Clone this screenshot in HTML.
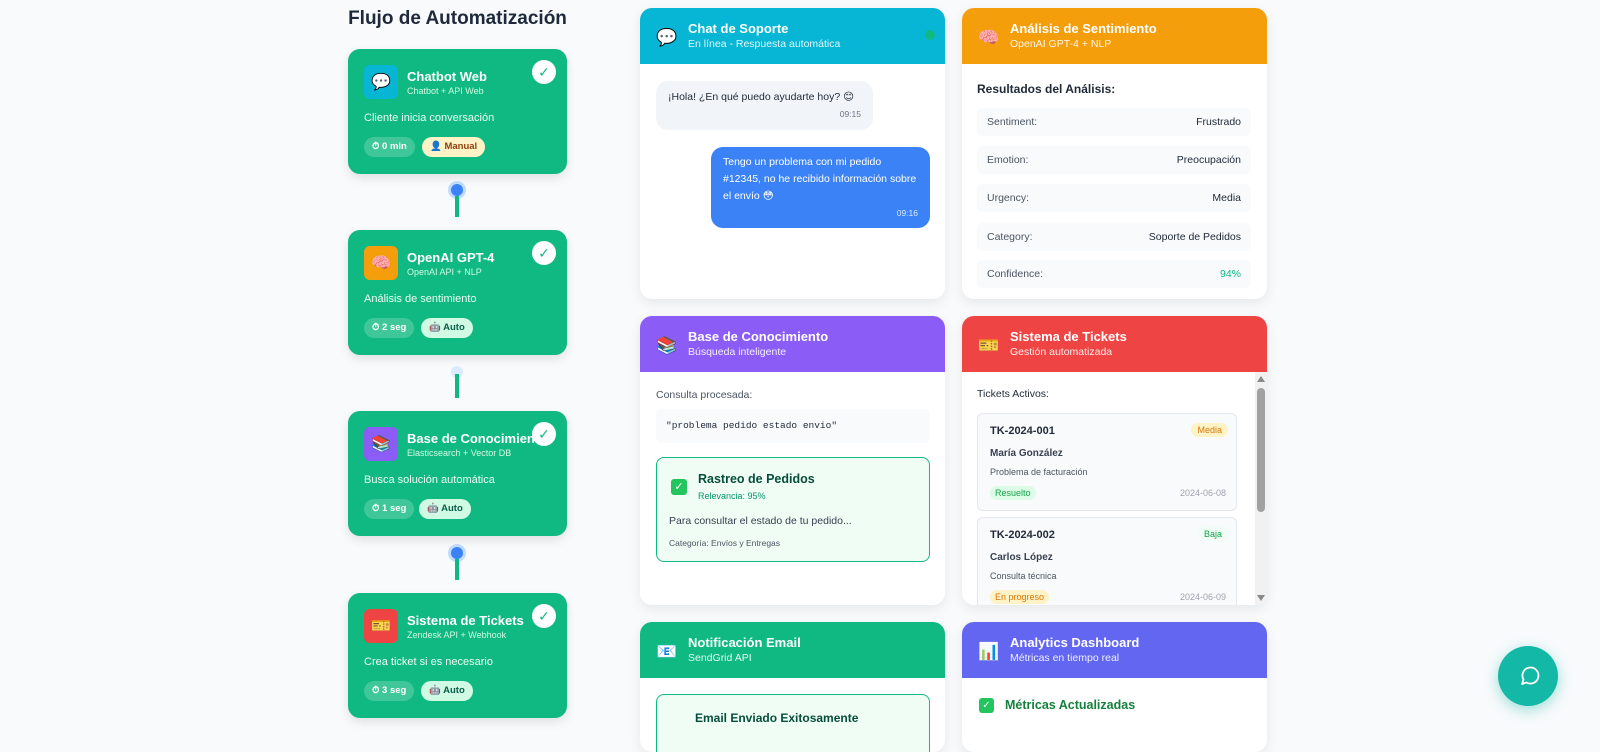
<!DOCTYPE html>
<html><head><meta charset="utf-8"><style>
*{box-sizing:border-box;margin:0;padding:0}
body{width:1600px;height:731px;overflow:hidden;background:#f8fafc;font-family:"Liberation Sans","DejaVu Sans",sans-serif;color:#1f2937;position:relative}
.abs{position:absolute}
h1{position:absolute;left:348px;width:219px;top:8px;text-align:center;font-size:19px;font-weight:bold;color:#1e293b;white-space:nowrap}
.step{position:absolute;left:348px;width:219px;height:125px;background:#10b981;border-radius:12px;color:#fff;box-shadow:0 4px 10px rgba(0,0,0,.1)}
.step .ic{position:absolute;left:16px;top:16px;width:34px;height:34px;border-radius:6px;display:flex;align-items:center;justify-content:center;font-size:16px}
.step .t{position:absolute;left:59px;top:20px;font-size:13px;font-weight:bold;white-space:nowrap}
.step .s{position:absolute;left:59px;top:37px;font-size:9px;color:#d1fae5}
.step .ck{position:absolute;right:11px;top:11px;width:24px;height:24px;border-radius:50%;background:#fff;color:#10b981;font-size:14px;text-align:center;line-height:24px}
.step .d{position:absolute;left:16px;top:63px;font-size:11px;color:#ecfdf5}
.step .b{position:absolute;top:88px;height:20px;border-radius:10px;font-size:9.5px;font-weight:bold;line-height:20px;padding:0 8px;white-space:nowrap}
.b1{left:16px;background:rgba(255,255,255,.2);color:#fff}
.b2{left:74px;background:#fef3c7;color:#92400e}
.b3{left:73px;background:#d1fae5;color:#065f46}
.dot{position:absolute;left:451px;width:12px;height:12px;border-radius:50%;background:#3b82f6;box-shadow:0 0 0 3px #bfdbfe}
.line{position:absolute;left:455px;width:4px;background:#10b981}
.card{position:absolute;width:305px;background:#fff;border-radius:12px;overflow:hidden;box-shadow:0 4px 12px rgba(0,0,0,.08)}
.hd{height:56px;position:relative;color:#fff}
.hd .ic{position:absolute;left:16px;top:20px;font-size:17px}
.hd .t{position:absolute;left:48px;top:13px;font-size:13px;font-weight:bold}
.hd .s{position:absolute;left:48px;top:30px;font-size:10.5px;opacity:.9}
.row{position:absolute;left:15px;width:274px;height:28px;background:#f8fafc;border-radius:6px;font-size:10.5px;line-height:28px;padding:0 10px;color:#4b5563}
.row b{float:right;font-weight:normal;color:#1f2937}
.tk{position:absolute;left:15px;width:260px;height:98px;background:#f9fafb;border:1px solid #e5e7eb;border-radius:6px}
.tk .id{position:absolute;left:12px;top:11px;font-size:11px;font-weight:bold}
.tk .pr{position:absolute;right:8px;top:9px;font-size:9px;padding:2px 6px;border-radius:8px}
.tk .n{position:absolute;left:12px;top:34px;font-size:10px;font-weight:bold;color:#374151}
.tk .ds{position:absolute;left:12px;top:53px;font-size:9px;color:#4b5563}
.tk .st{position:absolute;left:12px;top:72px;font-size:9px;padding:2px 5px;border-radius:8px}
.tk .dt{position:absolute;right:10px;top:74px;font-size:9px;color:#9ca3af}
</style></head><body>
<h1>Flujo de Automatización</h1>

<div class="step" style="top:49px"><div class="ic" style="background:#06b6d4">💬</div><div class="t">Chatbot Web</div><div class="s">Chatbot + API Web</div><div class="ck">✓</div><div class="d">Cliente inicia conversación</div><div class="b b1">⏱ 0 min</div><div class="b b2">👤 Manual</div></div>
<div class="dot" style="top:184px"></div><div class="line" style="top:196px;height:21px"></div>
<div class="step" style="top:230px"><div class="ic" style="background:#f59e0b">🧠</div><div class="t">OpenAI GPT-4</div><div class="s">OpenAI API + NLP</div><div class="ck">✓</div><div class="d">Análisis de sentimiento</div><div class="b b1">⏱ 2 seg</div><div class="b b3">🤖 Auto</div></div>
<div class="dot" style="top:366px;background:#dbeafe;box-shadow:none"></div><div class="line" style="top:374px;height:24px"></div>
<div class="step" style="top:411px"><div class="ic" style="background:#8b5cf6">📚</div><div class="t">Base de Conocimiento</div><div class="s">Elasticsearch + Vector DB</div><div class="ck">✓</div><div class="d">Busca solución automática</div><div class="b b1">⏱ 1 seg</div><div class="b b3" style="left:71px">🤖 Auto</div></div>
<div class="dot" style="top:547px"></div><div class="line" style="top:559px;height:21px"></div>
<div class="step" style="top:593px"><div class="ic" style="background:#ef4444">🎫</div><div class="t">Sistema de Tickets</div><div class="s">Zendesk API + Webhook</div><div class="ck">✓</div><div class="d">Crea ticket si es necesario</div><div class="b b1">⏱ 3 seg</div><div class="b b3">🤖 Auto</div></div>

<!-- Chat -->
<div class="card" style="left:640px;top:8px;height:291px">
<div class="hd" style="background:#06b6d4"><div class="ic">💬</div><div class="t">Chat de Soporte</div><div class="s">En línea - Respuesta automática</div><div class="abs" style="right:10px;top:22px;width:10px;height:10px;border-radius:50%;background:#10b981"></div></div>
<div class="abs" style="left:16px;top:73px;width:217px;height:49px;background:#f1f5f9;border-radius:12px;font-size:10.5px;padding:10px 12px;color:#1f2937">¡Hola! ¿En qué puedo ayudarte hoy? 😊<div style="text-align:right;font-size:8.5px;color:#6b7280;margin-top:6px">09:15</div></div>
<div class="abs" style="left:71px;top:139px;width:219px;height:81px;background:#3b82f6;border-radius:12px;font-size:10.5px;line-height:17px;padding:7px 12px;color:#fff">Tengo un problema con mi pedido #12345, no he recibido información sobre el envío 😳<div style="text-align:right;font-size:8.5px;color:#dbeafe;line-height:12px;margin-top:2px">09:16</div></div>
</div>

<!-- Sentiment -->
<div class="card" style="left:962px;top:8px;height:291px">
<div class="hd" style="background:#f59e0b"><div class="ic">🧠</div><div class="t">Análisis de Sentimiento</div><div class="s">OpenAI GPT-4 + NLP</div></div>
<div class="abs" style="left:15px;top:74px;font-size:12px;font-weight:bold;color:#1f2937">Resultados del Análisis:</div>
<div class="row" style="top:100px">Sentiment:<b>Frustrado</b></div>
<div class="row" style="top:138px">Emotion:<b>Preocupación</b></div>
<div class="row" style="top:176px">Urgency:<b>Media</b></div>
<div class="row" style="top:215px">Category:<b>Soporte de Pedidos</b></div>
<div class="row" style="top:252px">Confidence:<b style="color:#10b981">94%</b></div>
</div>

<!-- Knowledge -->
<div class="card" style="left:640px;top:316px;height:289px">
<div class="hd" style="background:#8b5cf6"><div class="ic">📚</div><div class="t">Base de Conocimiento</div><div class="s">Búsqueda inteligente</div></div>
<div class="abs" style="left:16px;top:73px;font-size:10.5px;color:#4b5563">Consulta procesada:</div>
<div class="abs" style="left:16px;top:93px;width:274px;height:34px;background:#f8fafc;border-radius:6px;font-family:'Liberation Mono',monospace;font-size:9.5px;line-height:34px;padding-left:10px">"problema pedido estado envio"</div>
<div class="abs" style="left:16px;top:141px;width:274px;height:105px;background:#f0fdf4;border:1px solid #10b981;border-radius:8px">
<div class="abs" style="left:14px;top:21px;width:16px;height:16px;background:#22c55e;border-radius:3px;color:#fff;font-size:11px;text-align:center;line-height:16px">✓</div>
<div class="abs" style="left:41px;top:14px;font-size:12.5px;font-weight:bold;color:#064e3b">Rastreo de Pedidos</div>
<div class="abs" style="left:41px;top:33px;font-size:9px;color:#059669">Relevancia: 95%</div>
<div class="abs" style="left:12px;top:57px;font-size:10.5px;color:#374151">Para consultar el estado de tu pedido...</div>
<div class="abs" style="left:12px;top:80px;font-size:8.5px;color:#4b5563">Categoría: Envíos y Entregas</div>
</div>
</div>

<!-- Tickets -->
<div class="card" style="left:962px;top:316px;height:289px">
<div class="hd" style="background:#ef4444"><div class="ic">🎫</div><div class="t">Sistema de Tickets</div><div class="s">Gestión automatizada</div></div>
<div class="abs" style="left:15px;top:72px;font-size:10.5px;color:#1f2937">Tickets Activos:</div>
<div class="tk" style="top:97px"><div class="id">TK-2024-001</div><div class="pr" style="background:#fef3c7;color:#d97706">Media</div><div class="n">María González</div><div class="ds">Problema de facturación</div><div class="st" style="background:#dcfce7;color:#16a34a">Resuelto</div><div class="dt">2024-06-08</div></div>
<div class="tk" style="top:201px"><div class="id">TK-2024-002</div><div class="pr" style="background:#f0fdf4;color:#16a34a">Baja</div><div class="n">Carlos López</div><div class="ds">Consulta técnica</div><div class="st" style="background:#fef3c7;color:#d97706">En progreso</div><div class="dt">2024-06-09</div></div>
<div class="abs" style="left:293px;top:56px;width:12px;height:233px;background:#f1f1f1"></div>
<div class="abs" style="left:295px;top:60px;border-left:4px solid transparent;border-right:4px solid transparent;border-bottom:6px solid #888"></div>
<div class="abs" style="left:295px;top:279px;border-left:4px solid transparent;border-right:4px solid transparent;border-top:6px solid #888"></div>
<div class="abs" style="left:295px;top:72px;width:8px;height:124px;background:#a1a1a1;border-radius:4px"></div>
</div>

<!-- Email -->
<div class="card" style="left:640px;top:622px;height:130px">
<div class="hd" style="background:#10b981"><div class="ic">📧</div><div class="t">Notificación Email</div><div class="s">SendGrid API</div></div>
<div class="abs" style="left:16px;top:72px;width:274px;height:80px;background:#f0fdf4;border:1px solid #10b981;border-radius:8px"><div class="abs" style="left:38px;top:16px;font-size:12px;font-weight:bold;color:#064e3b">Email Enviado Exitosamente</div></div>
</div>

<!-- Analytics -->
<div class="card" style="left:962px;top:622px;height:130px">
<div class="hd" style="background:#6366f1"><div class="ic">📊</div><div class="t">Analytics Dashboard</div><div class="s">Métricas en tiempo real</div></div>
<div class="abs" style="left:17px;top:76px;width:15px;height:15px;background:#22c55e;border-radius:3px;color:#fff;font-size:10px;text-align:center;line-height:15px">✓</div>
<div class="abs" style="left:43px;top:76px;font-size:12.5px;font-weight:bold;color:#15803d">Métricas Actualizadas</div>
</div>

<div class="abs" style="left:1498px;top:646px;width:60px;height:60px;border-radius:50%;background:#14b8a6;box-shadow:0 4px 14px rgba(20,184,166,.4)">
<svg width="60" height="60" viewBox="0 0 60 60"><path d="M24 38 L25.5 33.5 A8 8 0 1 1 28.5 36.5 Z" fill="none" stroke="#fff" stroke-width="1.8" stroke-linejoin="round"/></svg>
</div>
</body></html>
